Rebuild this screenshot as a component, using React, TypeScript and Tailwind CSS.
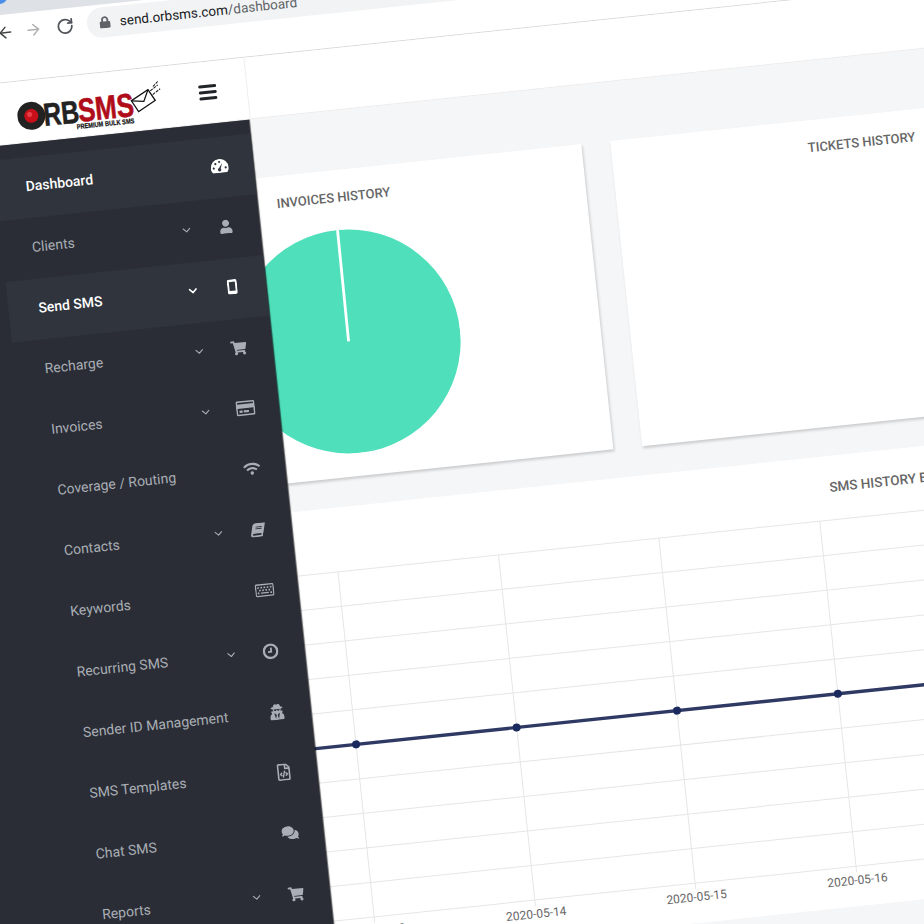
import { ArrowLeft, ArrowRight, RotateCw, ChevronDown } from 'lucide-react';
import {
  FaUser,
  FaShoppingCart,
  FaRegCreditCard,
  FaWifi,
  FaBook,
  FaRegKeyboard,
  FaUserSecret,
  FaRegFileCode,
  FaComments,
  FaLock,
} from 'react-icons/fa';

const GaugeIcon = () => (
  <svg width="18" height="14" viewBox="0 0 18 14">
    <path d="M2.2 14C.8 12.6 0 10.8 0 9a9 9 0 0 1 18 0c0 1.800-.8 3.600-2.200 5z" fill="currentColor" />
    <circle cx="3" cy="9" r="1.100" fill="#30343d" />
    <circle cx="5" cy="4.700" r="1.100" fill="#30343d" />
    <circle cx="9" cy="3" r="1.100" fill="#30343d" />
    <circle cx="15" cy="9" r="1.100" fill="#30343d" />
    <path d="M11.800 4.300L9.900 9.600a1.700 1.700 0 1 1-1.600-.5z" fill="#30343d" />
  </svg>
);

const PhoneIcon = () => (
  <svg width="10" height="15" viewBox="0 0 10 15">
    <rect x="0" y="0" width="10" height="15" rx="2" fill="currentColor" />
    <rect x="2" y="2.500" width="6" height="9" fill="#30343d" />
  </svg>
);

const ClockIcon = () => (
  <svg width="16" height="16" viewBox="0 0 16 16" fill="none" stroke="currentColor">
    <circle cx="8" cy="8" r="6.700" strokeWidth="2.300" />
    <path d="M8.600 4.300v4.200H5.400" strokeWidth="1.800" />
  </svg>
);

const LeaningBook = () => <FaBook size={14} className="-skew-x-[14deg]" />;
const UserIcon = () => <FaUser size={14} />;
const CartIcon = () => <FaShoppingCart size={16} />;
const CardIcon = () => <FaRegCreditCard size={19} />;
const WifiIcon = () => <FaWifi size={17} />;
const KeyboardIcon = () => <FaRegKeyboard size={19} />;
const SecretIcon = () => <FaUserSecret size={16} />;
const FileIcon = () => <FaRegFileCode size={17} />;
const ChatIcon = () => <FaComments size={17} />;

const menu = [
  { label: 'Dashboard', icon: GaugeIcon, arrow: false, state: 'current' },
  { label: 'Clients', icon: UserIcon, arrow: true, state: '' },
  { label: 'Send SMS', icon: PhoneIcon, arrow: true, state: 'active' },
  { label: 'Recharge', icon: CartIcon, arrow: true, state: '' },
  { label: 'Invoices', icon: CardIcon, arrow: true, state: '' },
  { label: 'Coverage / Routing', icon: WifiIcon, arrow: false, state: '' },
  { label: 'Contacts', icon: LeaningBook, arrow: true, state: '' },
  { label: 'Keywords', icon: KeyboardIcon, arrow: false, state: '' },
  { label: 'Recurring SMS', icon: ClockIcon, arrow: true, state: '' },
  { label: 'Sender ID Management', icon: SecretIcon, arrow: false, state: '' },
  { label: 'SMS Templates', icon: FileIcon, arrow: false, state: '' },
  { label: 'Chat SMS', icon: ChatIcon, arrow: false, state: '' },
  { label: 'Reports', icon: CartIcon, arrow: true, state: '' },
];

const rows = [24, 58.7, 93.4, 128.1, 162.8, 197.5, 232.2, 266.9, 301.6, 336.3, 371];
const ticks = [
  { x: 56, date: '2020-05-12' },
  { x: 217.3, date: '2020-05-13' },
  { x: 378.8, date: '2020-05-14' },
  { x: 540, date: '2020-05-15' },
  { x: 701.8, date: '2020-05-16' },
  { x: 863.2, date: '2020-05-17' },
  { x: 1024.5, date: '2020-05-18' },
];

const Logo = () => (
  <svg width="150" height="50" viewBox="0 0 150 50" className="shrink-0">
    <circle cx="14" cy="29.500" r="14" fill="#222222" />
    <circle cx="14" cy="29.500" r="7" fill="#c8101a" />
    <circle cx="12.500" cy="28" r="2.500" fill="#e8404a" />
    <text x="26" y="41" fontFamily="Liberation Sans" fontWeight="700" fontSize="32" fill="#222222" stroke="#222222" strokeWidth="0.500" textLength="36" lengthAdjust="spacingAndGlyphs">RB</text>
    <text x="61" y="40.500" fontFamily="Liberation Sans" fontWeight="700" fontSize="33" fill="#b00d1a" stroke="#b00d1a" strokeWidth="0.600" textLength="56" lengthAdjust="spacingAndGlyphs">SMS</text>
    <text x="58" y="47.500" fontFamily="Liberation Sans" fontWeight="700" fontSize="7" fill="#111111" stroke="#111111" strokeWidth="0.200" textLength="58" lengthAdjust="spacingAndGlyphs">PREMIUM BULK SMS</text>
    <g transform="rotate(-28 127 26)" fill="#ffffff" stroke="#111111" strokeWidth="1.300">
      <rect x="117" y="19.500" width="20" height="13" />
      <path d="M117 19.500l10 7.500 10-7.500" fill="none" />
    </g>
    <path d="M135 17l8-5M137 21l8-5M138 13l6-5" stroke="#111111" strokeWidth="1" strokeDasharray="3 1" fill="none" />
  </svg>
);

const Chart = () => (
  <svg width="1033" height="410" viewBox="0 0 1033 410" className="block">
    {rows.map((y) => (
      <line key={y} x1="0" y1={y} x2="1033" y2={y} stroke="#e6e6e6" strokeWidth="1" />
    ))}
    {ticks.map((t) => (
      <g key={t.x}>
        <line x1={t.x} y1="24" x2={t.x} y2="377" stroke="#e6e6e6" strokeWidth="1" />
        <text x={t.x} y="389" textAnchor="middle" fontFamily="Roboto" fontSize="12" fill="#666666">{t.date}</text>
      </g>
    ))}
    <line x1="0" y1="197.500" x2="1033" y2="197.500" stroke="#2e3a63" strokeWidth="3.400" />
    {ticks.map((t) => (
      <circle key={t.x} cx={t.x} cy="197.500" r="4" fill="#1b2a5e" />
    ))}
  </svg>
);

const Pie = () => (
  <svg width="224" height="224" viewBox="0 0 224 224" className="block">
    <circle cx="112" cy="112" r="112" fill="#50dfbb" />
    <line x1="112" y1="112" x2="112.600" y2="0" stroke="#ffffff" strokeWidth="2.800" />
  </svg>
);

export default function App() {
  return (
    <div className="relative w-[924px] h-[924px] overflow-hidden bg-white font-['Roboto',sans-serif]">
      {/* the whole browser window is a photo lying at an angle */}
      <div className="absolute -left-[120px] -top-[100px] w-[1400px] h-[1300px] origin-[120px_100px] rotate-[-6deg] flex flex-col bg-[#f5f6f8]">
        <div className="relative h-[115px] shrink-0 bg-[#dee1e6]">
          <div className="absolute left-[112px] top-[88px] w-4 h-4 rounded-full bg-[#4a90e8]" />
        </div>

        <div className="h-[68px] shrink-0 bg-white border-b border-[#d9d9d9] flex items-start pt-[3px] pl-[113px]">
          <div className="h-[30px] flex items-center text-[#444746]">
            <ArrowLeft size={18} />
          </div>
          <div className="h-[30px] flex items-center ml-[10px] text-[#b0b0b0]">
            <ArrowRight size={18} />
          </div>
          <div className="h-[30px] flex items-center ml-[14px] text-[#50545a]">
            <RotateCw size={18} strokeWidth={2.4} />
          </div>
          <div className="ml-[13px] h-[30px] w-[500px] rounded-full bg-[#f1f3f4] flex items-center pl-3">
            <FaLock size={12} className="text-[#5f6368]" />
            <span className="ml-[9px] text-[13.500px] text-[#202124]">
              send.orbsms.com<span className="text-[#5f6368]">/dashboard</span>
            </span>
          </div>
        </div>

        <div className="flex flex-1 min-h-0">
          <aside className="relative z-10 w-[355px] shrink-0 flex flex-col">
            <div className="w-[357px] h-[62px] shrink-0 bg-white border-r border-[#eeeeee] flex items-center justify-between pl-[125px] pr-[30px]">
              <Logo />
              <div className="flex flex-col gap-[3px] mb-[2px]">
                <div className="w-[18px] h-[3px] rounded-sm bg-[#212529]" />
                <div className="w-[18px] h-[3px] rounded-sm bg-[#212529]" />
                <div className="w-[18px] h-[3px] rounded-sm bg-[#212529]" />
              </div>
            </div>
            <nav className="flex-1 bg-[#2a2d36] pt-[14px] pl-[96px] shadow-[1px_0_1px_rgba(0,0,0,0.6)]">
              {menu.map((m) => {
                const Icon = m.icon;
                const on = m.state !== '';
                return (
                  <div
                    key={m.label}
                    className={`h-[61px] flex items-center pl-[30px] pr-[22px] pb-[4px] text-sm ${on ? 'bg-[#30343d] text-white font-medium' : 'text-[#a9adb4]'}`}
                  >
                    <span className="flex-1 whitespace-nowrap">{m.label}</span>
                    <span className="w-4 flex justify-center">
                      {m.arrow && <ChevronDown size={13} strokeWidth={on ? 3 : 2} />}
                    </span>
                    <span className="w-6 ml-5 flex justify-center">
                      <Icon />
                    </span>
                  </div>
                );
              })}
            </nav>
          </aside>

          <main className="flex-1 min-w-0">
            <div className="h-[62px] bg-white border-b border-[#ececec]" />
            <div className="pt-[59px]">
              <div className="flex gap-[29px] -ml-[176px]">
                <section className="w-[504px] h-[307px] shrink-0 bg-white shadow-[1px_2px_3px_rgba(0,0,0,0.18)] pt-[20px] flex flex-col items-center">
                  <h3 className="text-[13px] leading-4 font-medium text-[#666666]">INVOICES HISTORY</h3>
                  <div className="mt-[24px]">
                    <Pie />
                  </div>
                </section>
                <section className="w-[500px] h-[307px] shrink-0 bg-white shadow-[1px_2px_3px_rgba(0,0,0,0.18)] pt-[20px] flex flex-col items-center">
                  <h3 className="text-[13px] leading-4 font-medium text-[#666666]">TICKETS HISTORY</h3>
                </section>
              </div>
              <section className="w-[1033px] mt-[29px] -ml-[176px] bg-white pt-[23px] pb-px">
                <h3 className="h-4 pl-[715px] text-[13.500px] leading-4 font-medium text-[#666666] whitespace-nowrap">SMS HISTORY BY DATE</h3>
                <div className="mt-px">
                  <Chart />
                </div>
              </section>
            </div>
          </main>
        </div>
      </div>
    </div>
  );
}
